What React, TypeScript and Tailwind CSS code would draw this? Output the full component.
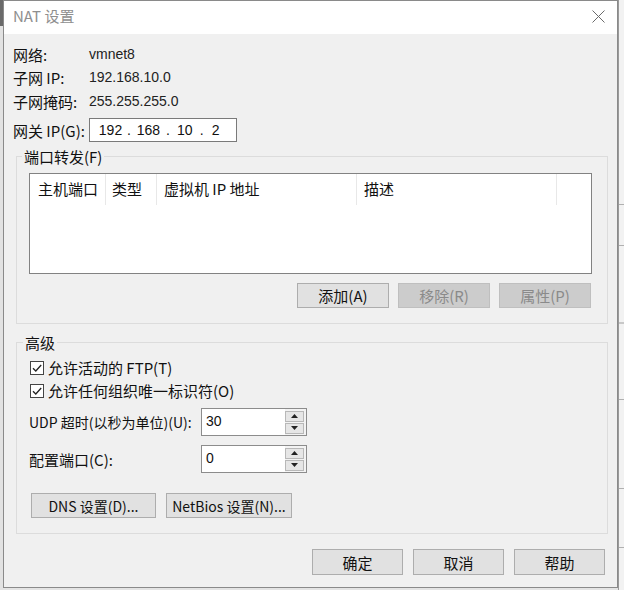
import React from "react";

const CJK = "font-['Noto_Sans_CJK_SC','Liberation_Sans',sans-serif]";
const LAT = "font-['Liberation_Sans','Noto_Sans_CJK_SC',sans-serif]";

function Btn({ children, disabled, className = "" }: { children: React.ReactNode; disabled?: boolean; className?: string }) {
  return (
    <div
      className={
        "flex items-center justify-center border leading-none whitespace-nowrap " +
        (disabled ? "bg-[#cccccc] border-[#bfbfbf] text-[#8a8a8a] " : "bg-[#e1e1e1] border-[#adadad] text-[#111] ") +
        className
      }
    >
      {children}
    </div>
  );
}

function Check({ label }: { label: string }) {
  return (
    <div className="flex items-center h-[23px]">
      <div className="w-[14px] h-[14px] border border-[#444] bg-white flex items-center justify-center">
        <svg width="12" height="12" viewBox="0 0 12 12">
          <path d="M2 6.2 L4.8 9 L10.2 3" fill="none" stroke="#222" strokeWidth="1.3" />
        </svg>
      </div>
      <span className="ml-[4px] text-[15px] leading-[17px] text-[#111] whitespace-nowrap">{label}</span>
    </div>
  );
}

function Spin({ value }: { value: string }) {
  return (
    <div className="w-[106px] h-[28px] border border-[#8c8c8c] bg-white flex">
      <div className={"flex-1 pl-[4px] pt-[4px] text-[14px] leading-[16px] text-[#111] " + LAT}>{value}</div>
      <div className="w-[21px] flex flex-col justify-center gap-[1px] pr-[2px] bg-[#f3f3f3]">
        <div className="h-[11px] border border-[#b8b8b8] bg-[#e6e6e6] flex items-center justify-center">
          <svg width="7" height="4" viewBox="0 0 7 4"><path d="M0 4 L3.5 0 L7 4 Z" fill="#222" /></svg>
        </div>
        <div className="h-[11px] border border-[#b8b8b8] bg-[#e6e6e6] flex items-center justify-center">
          <svg width="7" height="4" viewBox="0 0 7 4"><path d="M0 0 L3.5 4 L7 0 Z" fill="#222" /></svg>
        </div>
      </div>
    </div>
  );
}

export default function App() {
  return (
    <div className={"w-[624px] h-[590px] bg-[#e4e4e4] flex overflow-hidden " + CJK}>
      {/* left strip of background window */}
      <div className="w-[3px] h-full bg-[#d6d6d6] flex flex-col">
        <div className="h-[26px] bg-[#6a6a6a]" />
        <div className="flex-1 bg-[#e2e2e2]" />
      </div>

      {/* dialog */}
      <div className="w-[615px] h-[588px] border border-[#8a8a8a] bg-[#f0f0f0] flex flex-col">
        {/* title bar */}
        <div className="h-[33px] bg-white flex items-center justify-between pl-[9px] pr-[12px] pb-[3px]">
          <span className="text-[15px] leading-[18px] text-[#8f8f8f]">NAT 设置</span>
          <svg width="13" height="13" viewBox="0 0 13 13">
            <path d="M0.5 0.5 L12.5 12.5 M12.5 0.5 L0.5 12.5" stroke="#6a6a6a" strokeWidth="1" fill="none" />
          </svg>
        </div>

        {/* body */}
        <div className="pt-[9px] flex flex-col">
          <div className="flex items-center h-[23px] pl-[9px]">
            <span className="w-[76px] text-[15px] leading-[17px] text-[#111]">网络:</span>
            <span className={"text-[14px] text-[#222] " + LAT}>vmnet8</span>
          </div>
          <div className="flex items-center h-[23px] pl-[9px]">
            <span className="w-[76px] text-[15px] leading-[17px] text-[#111]">子网 IP:</span>
            <span className={"text-[14px] text-[#222] " + LAT}>192.168.10.0</span>
          </div>
          <div className="flex items-center h-[24px] pl-[9px]">
            <span className="w-[76px] text-[15px] leading-[17px] text-[#111]">子网掩码:</span>
            <span className={"text-[14px] text-[#222] " + LAT}>255.255.255.0</span>
          </div>
          <div className="flex items-center h-[24px] mt-[5px] pl-[9px]">
            <span className="w-[76px] text-[15px] leading-[17px] text-[#111] whitespace-nowrap">网关 IP(G):</span>
            <div className={"w-[148px] h-[24px] border border-[#7a7a7a] bg-white flex items-center text-[14px] text-[#111] " + LAT}>
              <span className="w-[37px] text-center pl-[4px]">192</span>
              <span>.</span>
              <span className="w-[35px] text-center">168</span>
              <span>.</span>
              <span className="w-[30px] text-center">10</span>
              <span>.</span>
              <span className="w-[24px] text-center">2</span>
            </div>
          </div>

          {/* port forwarding group */}
          <fieldset className="ml-[12px] w-[592px] mt-[6px] border border-[#dcdcdc] pl-[12px] pt-[8px] pb-[15px]">
            <legend className="-ml-[7px] px-[2px] text-[15px] leading-[17px] text-[#111]">端口转发(F)</legend>
            <div className="w-[563px] h-[101px] border border-[#828282] bg-white">
              <div className="h-[31px] flex items-stretch text-[15px] text-[#111]">
                <div className="w-[76px] flex items-center pl-[8px] border-r border-[#e8e8e8]">主机端口</div>
                <div className="w-[51px] flex items-center pl-[6px] border-r border-[#e8e8e8]">类型</div>
                <div className="w-[200px] flex items-center pl-[7px] border-r border-[#e8e8e8]">虚拟机 IP 地址</div>
                <div className="w-[200px] flex items-center pl-[7px] border-r border-[#e8e8e8]">描述</div>
                <div className="flex-1" />
              </div>
            </div>
            <div className="mt-[9px] w-[563px] flex justify-end gap-[9px] pr-[1px]">
              <Btn className="w-[92px] h-[25px] text-[15px]">添加(A)</Btn>
              <Btn disabled className="w-[92px] h-[25px] text-[15px]">移除(R)</Btn>
              <Btn disabled className="w-[92px] h-[25px] text-[15px]">属性(P)</Btn>
            </div>
          </fieldset>

          {/* advanced group */}
          <fieldset className="ml-[12px] w-[592px] mt-[10px] border border-[#dcdcdc] pl-[13px] pt-[5px] pb-[15px]">
            <legend className="-ml-[7px] px-[2px] text-[15px] leading-[17px] text-[#111]">高级</legend>
            <Check label="允许活动的 FTP(T)" />
            <Check label="允许任何组织唯一标识符(O)" />
            <div className="flex items-center mt-[6px]">
              <span className="w-[172px] -ml-[1px] text-[14px] leading-[17px] text-[#111] whitespace-nowrap">UDP 超时(以秒为单位)(U):</span>
              <Spin value="30" />
            </div>
            <div className="flex items-center mt-[9px]">
              <span className="w-[172px] -ml-[1px] text-[15px] leading-[17px] text-[#111] whitespace-nowrap">配置端口(C):</span>
              <Spin value="0" />
            </div>
            <div className="flex mt-[20px] ml-[1px] gap-[10px]">
              <Btn className="w-[125px] h-[25px] text-[14px]">DNS 设置(D)...</Btn>
              <Btn className="w-[126px] h-[25px] text-[14px]">NetBios 设置(N)...</Btn>
            </div>
          </fieldset>

          {/* dialog buttons */}
          <div className="mt-[15px] flex justify-end gap-[10px] pr-[12px]">
            <Btn className="w-[91px] h-[26px] text-[15px]">确定</Btn>
            <Btn className="w-[91px] h-[26px] text-[15px]">取消</Btn>
            <Btn className="w-[91px] h-[26px] text-[15px]">帮助</Btn>
          </div>
        </div>
      </div>

      {/* right strip of background window */}
      <div className="flex-1 h-full bg-[#f2f2f2] flex flex-col border-l border-[#9a9a9a]">
        <div className="h-[204px]" />
        <div className="h-[1px] bg-[#b0b0b0]" />
        <div className="h-[40px]" />
        <div className="h-[1px] bg-[#b0b0b0]" />
        <div className="h-[76px]" />
        <div className="h-[2px] bg-[#c8c8c8]" />
        <div className="h-[75px]" />
        <div className="h-[1px] bg-[#b0b0b0]" />
        <div className="h-[88px]" />
        <div className="h-[1px] bg-[#b0b0b0]" />
        <div className="h-[58px]" />
        <div className="h-[1px] bg-[#b0b0b0]" />
        <div className="flex-1" />
      </div>
    </div>
  );
}
